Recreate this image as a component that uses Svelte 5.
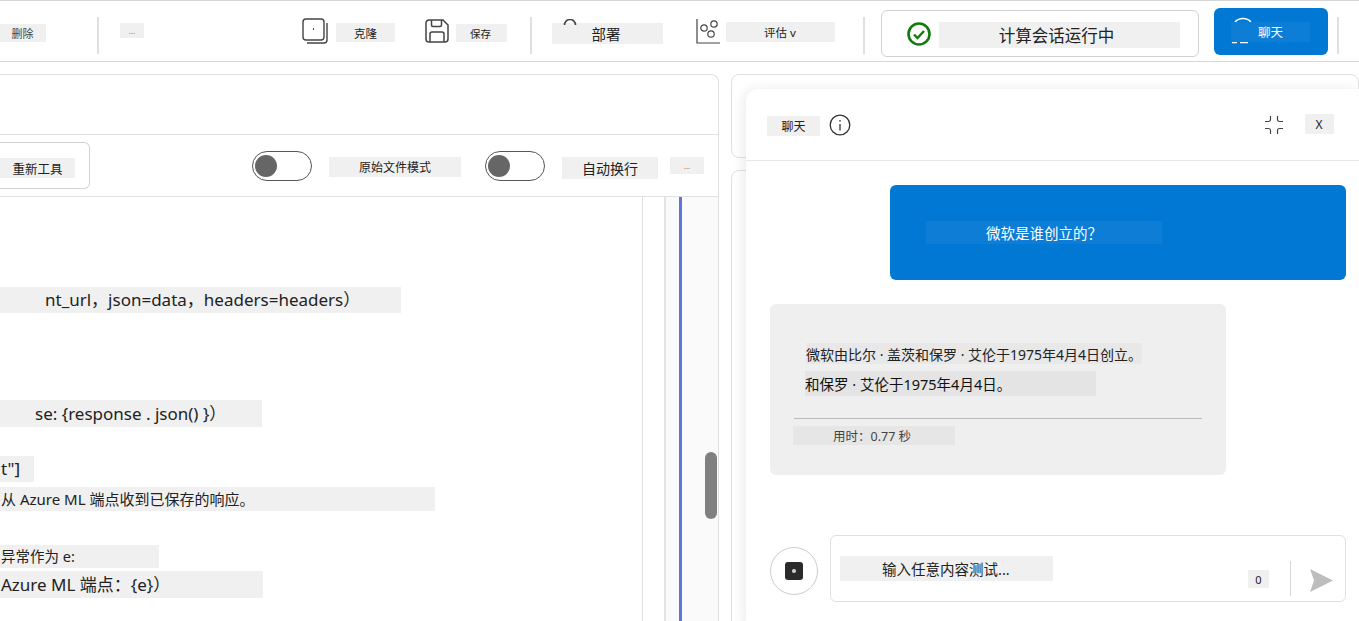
<script>
  const codeLines = [
    { cls: "a", text: "nt_url，json=data，headers=headers）" },
    { cls: "b", text: "se: {response . json() }）" },
    { cls: "c", text: 't"]' },
    { cls: "d", text: "从 Azure ML 端点收到已保存的响应。" },
    { cls: "e", text: "异常作为 e:" },
    { cls: "f", text: "Azure ML 端点：{e}）" },
  ];
</script>

<div class="page">
  <header class="toolbar">
    <span class="tag del">删除</span>
    <i class="divider d1"></i>
    <span class="tag more">...</span>

    <svg class="ico clone" width="26" height="26" viewBox="0 0 26 26" fill="none" stroke="#444" stroke-width="1.4">
      <rect x="1" y="1" width="21" height="21" rx="3" />
      <path d="M25 5v17a3 3 0 0 1-3 3H5" />
      <path d="M11.5 10v2" stroke-width="1" />
    </svg>
    <span class="tag clone-l">克隆</span>

    <svg class="ico save" width="24" height="24" viewBox="0 0 24 24" fill="none" stroke="#444" stroke-width="1.5">
      <path d="M4 1h14l5 5v14a3 3 0 0 1-3 3H4a3 3 0 0 1-3-3V4a3 3 0 0 1 3-3z" />
      <path d="M6.5 1v5a1.5 1.5 0 0 0 1.5 1.5h7A1.5 1.5 0 0 0 16.500 6V1" />
      <path d="M5 23v-8a2 2 0 0 1 2-2h10a2 2 0 0 1 2 2v8" />
    </svg>
    <span class="tag save-l">保存</span>
    <i class="divider d2"></i>

    <span class="tag deploy">
      <svg class="deploy-arc" width="14" height="6" viewBox="0 0 14 6" fill="none" stroke="#444" stroke-width="1.600">
        <path d="M1.500 6a5.500 5.500 0 0 1 11 0" />
      </svg>
      部署
    </span>

    <svg class="ico chart" width="24" height="25" viewBox="0 0 24 25" fill="none" stroke="#444" stroke-width="1.200">
      <path d="M1 0v24h23" />
      <circle cx="8" cy="9" r="3.200" />
      <circle cx="18" cy="5" r="3.200" />
      <circle cx="15" cy="15" r="3.200" />
    </svg>
    <span class="tag eval">评估 v</span>
    <i class="divider d3"></i>

    <div class="status">
      <svg width="24" height="24" viewBox="0 0 24 24" fill="none" stroke="#107c10">
        <circle cx="12" cy="12" r="10.500" stroke-width="2.600" />
        <path d="M7 12.500l3.500 3.500L17 9" stroke-width="2.400" />
      </svg>
      <span class="tag status-l">计算会话运行中</span>
    </div>

    <button class="chat-btn">
      <svg class="spin" width="22" height="27" viewBox="0 0 22 27" fill="none" stroke="#fff" stroke-width="1.600">
        <path d="M3 5a11 11 0 0 1 16 0" />
        <path d="M0 25.500h5M8 25.500h8" />
      </svg>
      <span class="chat-l">聊天</span>
    </button>
    <i class="divider d4"></i>
  </header>

  <main class="main">
    <section class="editor">
      <div class="editor-head"></div>
      <div class="editor-tools">
        <div class="tool-btn"><span class="tag tool-l">重新工具</span></div>
        <span class="toggle t1"><i></i></span>
        <span class="tag raw">原始文件模式</span>
        <span class="toggle t2"><i></i></span>
        <span class="tag wrap">自动换行</span>
        <span class="tag more2">...</span>
      </div>
      <div class="editor-body">
        <div class="code">
          {#each codeLines as line}
            <div class="line {line.cls}">{line.text}</div>
          {/each}
        </div>
        <div class="gutter"></div>
        <div class="minimap">
          <i class="marker"></i>
          <i class="thumb"></i>
        </div>
      </div>
    </section>

    <aside class="side">
      <div class="card top"></div>
      <div class="card rest"></div>
    </aside>
  </main>

  <div class="drawer">
    <div class="drawer-head">
      <span class="tag title">聊天</span>
      <svg class="info" width="22" height="22" viewBox="0 0 22 22" fill="none" stroke="#333" stroke-width="1.300">
        <circle cx="11" cy="11" r="9.800" />
        <path d="M11 10v6.500" />
        <path d="M11 6.200v1.300" stroke-width="1.600" />
      </svg>
      <svg class="collapse" width="20" height="20" viewBox="0 0 20 20" fill="none" stroke="#444" stroke-width="1.200">
        <path d="M6.500 1v3.500a2 2 0 0 1-2 2H1" />
        <path d="M13.500 1v3.500a2 2 0 0 0 2 2H19" />
        <path d="M1 13.500h3.500a2 2 0 0 1 2 2V19" />
        <path d="M19 13.500h-3.500a2 2 0 0 0-2 2V19" />
      </svg>
      <span class="tag close">X</span>
    </div>

    <div class="messages">
      <div class="user-msg"><span class="user-l">微软是谁创立的？</span></div>
      <div class="bot-msg">
        <span class="tag m1">微软由比尔 · 盖茨和保罗 · 艾伦于1975年4月4日创立。</span>
        <span class="tag m2">和保罗 · 艾伦于1975年4月4日。</span>
        <hr />
        <span class="tag m3">用时：0.77 秒</span>
      </div>
    </div>

    <div class="composer">
      <div class="attach"><i></i></div>
      <div class="input">
        <span class="tag hint">输入任意内容测试...</span>
        <span class="tag count">0</span>
        <i class="input-sep"></i>
        <svg width="23" height="23" viewBox="0 0 23 23" fill="#bdbdbd">
          <path d="M0 0l23 11.500L0 23l4-11.500z" />
        </svg>
      </div>
    </div>
  </div>
</div>

<style>
  :global(body) {
    margin: 0;
    background: #fff;
  }

  .page {
    position: relative;
    width: 1359px;
    height: 621px;
    overflow: hidden;
    background: #fff;
    color: #222;
    font-family: "Noto Sans", "Noto Sans CJK SC", sans-serif;
  }

  .tag {
    display: flex;
    flex: none;
    align-items: center;
    justify-content: center;
    box-sizing: border-box;
    background: #f0f0f0;
    white-space: nowrap;
  }

  /* toolbar */
  .toolbar {
    display: flex;
    align-items: flex-start;
    box-sizing: border-box;
    height: 62px;
    border-top: 1px solid #d6d6d6;
    border-bottom: 1px solid #d6d6d6;
  }

  .divider {
    flex: none;
    width: 2px;
    height: 37px;
    margin-top: 16px;
    background: #e0e0e0;
  }

  .ico {
    flex: none;
  }

  .del {
    width: 46px;
    height: 18px;
    margin-top: 23px;
    padding-right: 1px;
    font-size: 11px;
    color: #444;
  }

  .d1 {
    margin-left: 51px;
  }

  .more {
    width: 24px;
    height: 15px;
    margin: 22px 0 0 21px;
    font-size: 8px;
    color: #777;
  }

  .clone {
    margin: 17px 0 0 158px;
  }

  .clone-l {
    width: 59px;
    height: 19px;
    margin: 22px 0 0 8px;
    font-size: 11.500px;
  }

  .save {
    margin: 18px 0 0 30px;
  }

  .save-l {
    width: 51px;
    height: 18px;
    margin: 23px 0 0 7px;
    padding-right: 2px;
    font-size: 10.500px;
  }

  .d2 {
    margin-left: 23px;
  }

  .deploy {
    position: relative;
    width: 111px;
    height: 21px;
    margin: 22px 0 0 20px;
    padding-right: 3px;
    font-size: 14.500px;
  }

  .deploy-arc {
    position: absolute;
    left: 11px;
    top: -4px;
  }

  .chart {
    margin: 18px 0 0 33px;
  }

  .eval {
    width: 109px;
    height: 20px;
    margin: 21px 0 0 6px;
    padding-right: 1px;
    font-size: 11.500px;
  }

  .d3 {
    margin-left: 28px;
  }

  .status {
    display: flex;
    flex: none;
    align-items: center;
    box-sizing: border-box;
    width: 318px;
    height: 47px;
    margin: 9px 0 0 16px;
    padding-left: 25px;
    border: 1px solid #d2d2d2;
    border-radius: 6px;
  }

  .status-l {
    width: 241px;
    height: 26px;
    margin: 2px 0 0 8px;
    padding-right: 6px;
    font-size: 16.500px;
    color: #222;
  }

  .chat-btn {
    position: relative;
    display: flex;
    flex: none;
    align-items: center;
    box-sizing: border-box;
    width: 114px;
    height: 47px;
    margin: 7px 0 0 15px;
    padding: 0 0 0 17px;
    border: 0;
    border-radius: 6px;
    background: #0078d4;
    font: inherit;
  }

  .spin {
    position: absolute;
    left: 18px;
    top: 9px;
  }

  .chat-l {
    position: relative;
    display: flex;
    align-items: center;
    box-sizing: border-box;
    width: 79px;
    height: 20px;
    padding-left: 27px;
    background: #0d7dd6;
    color: #fff;
    font-size: 12.500px;
  }

  .d4 {
    margin-left: 9px;
  }

  /* editor and the cards behind the chat */
  .main {
    display: flex;
    gap: 12px;
    padding-top: 12px;
  }

  .editor {
    flex: none;
    box-sizing: border-box;
    width: 719px;
    height: 580px;
    border: 1px solid #e0e0e0;
    border-left: 0;
    border-radius: 0 8px 0 0;
  }

  .editor-head {
    height: 59px;
    border-bottom: 1px solid #e0e0e0;
  }

  .editor-tools {
    display: flex;
    align-items: flex-start;
    box-sizing: border-box;
    height: 62px;
    border-bottom: 1px solid #e0e0e0;
  }

  .tool-btn {
    flex: none;
    box-sizing: border-box;
    width: 90px;
    height: 47px;
    margin-top: 7px;
    padding-top: 15px;
    border: 1px solid #d2d2d2;
    border-left: 0;
    border-radius: 0 6px 6px 0;
  }

  .tool-l {
    width: 75px;
    height: 20px;
    font-size: 12.500px;
  }

  .toggle {
    display: flex;
    flex: none;
    align-items: center;
    box-sizing: border-box;
    width: 60px;
    height: 30px;
    padding-left: 2px;
    border: 1px solid #555;
    border-radius: 15px;
  }

  .toggle i {
    width: 22px;
    height: 22px;
    border-radius: 50%;
    background: #666;
  }

  .t1 {
    margin: 16px 0 0 162px;
  }

  .raw {
    width: 132px;
    height: 20px;
    margin: 22px 0 0 17px;
    font-size: 12px;
  }

  .t2 {
    margin: 16px 0 0 24px;
  }

  .wrap {
    width: 96px;
    height: 22px;
    margin: 22px 0 0 17px;
    font-size: 14px;
  }

  .more2 {
    width: 34px;
    height: 17px;
    margin: 22px 0 0 12px;
    font-size: 8px;
    color: #777;
  }

  .editor-body {
    display: flex;
    height: 424px;
  }

  .code {
    flex: none;
    box-sizing: border-box;
    width: 643px;
    border-right: 1px solid #e0e0e0;
  }

  .line {
    box-sizing: border-box;
    background: #f0f0f0;
    color: #222;
    white-space: nowrap;
    font-size: 17px;
  }

  .line.a {
    width: 401px;
    height: 26px;
    margin-top: 90px;
    padding-left: 45px;
    line-height: 26px;
  }

  .line.b {
    width: 262px;
    height: 27px;
    margin-top: 87px;
    padding-left: 35px;
    line-height: 27px;
  }

  .line.c {
    width: 34px;
    height: 26px;
    margin-top: 29px;
    padding-left: 1px;
    line-height: 26px;
  }

  .line.d {
    width: 435px;
    height: 24px;
    margin-top: 5px;
    padding-left: 1px;
    font-size: 15px;
    line-height: 24px;
  }

  .line.e {
    width: 159px;
    height: 23px;
    margin-top: 34px;
    padding-left: 1px;
    font-size: 14.500px;
    line-height: 23px;
  }

  .line.f {
    width: 263px;
    height: 27px;
    margin-top: 3px;
    padding-left: 1px;
    line-height: 27px;
  }

  .gutter {
    flex: none;
    width: 21px;
  }

  .minimap {
    display: flex;
    flex: 1;
    align-items: flex-start;
    border-left: 2px solid #e4e4e4;
    background: #fafafa;
    padding-left: 13px;
  }

  .marker {
    flex: none;
    width: 3px;
    height: 100%;
    background: #5f75d8;
  }

  .thumb {
    flex: none;
    width: 12px;
    height: 67px;
    margin: 255px 0 0 23px;
    border-radius: 6px;
    background: #808080;
  }

  .side {
    display: flex;
    flex: 1;
    flex-direction: column;
    gap: 12px;
  }

  .card {
    box-sizing: border-box;
    border: 1px solid #e0e0e0;
    border-radius: 8px;
  }

  .card.top {
    height: 84px;
  }

  .card.rest {
    height: 500px;
  }

  /* chat drawer */
  .drawer {
    position: absolute;
    left: 746px;
    right: 0;
    top: 89px;
    bottom: -10px;
    border-radius: 12px 0 0 12px;
    background: #fff;
    box-shadow: -3px 0 12px rgba(0, 0, 0, 0.08);
  }

  .drawer-head {
    display: flex;
    align-items: flex-start;
    box-sizing: border-box;
    height: 72px;
    border-bottom: 1px solid #e6e6e6;
  }

  .title {
    width: 53px;
    height: 20px;
    margin: 27px 0 0 21px;
    font-size: 12px;
  }

  .info {
    flex: none;
    margin: 25px 0 0 9px;
  }

  .collapse {
    flex: none;
    margin: 26px 0 0 413px;
  }

  .close {
    width: 29px;
    height: 20px;
    margin: 25px 0 0 21px;
    padding-right: 1px;
    font-size: 12px;
  }

  .messages {
    display: flex;
    flex-direction: column;
    height: 350px;
    padding: 24px 13px 0 24px;
  }

  .user-msg {
    display: flex;
    align-items: center;
    align-self: flex-end;
    box-sizing: border-box;
    width: 456px;
    height: 95px;
    padding: 0 0 0 36px;
    border-radius: 6px;
    background: #0078d4;
  }

  .user-l {
    display: flex;
    align-items: center;
    justify-content: center;
    width: 236px;
    height: 23px;
    background: #0d7dd6;
    color: #fff;
    font-size: 14.500px;
  }

  .bot-msg {
    box-sizing: border-box;
    width: 456px;
    height: 171px;
    margin-top: 24px;
    padding: 39px 24px 0;
    border-radius: 6px;
    background: #efefef;
  }

  .m1 {
    justify-content: flex-start;
    width: 336px;
    height: 21px;
    margin-left: 12px;
    background: #e8e8e8;
    font-size: 14px;
  }

  .m2 {
    justify-content: flex-start;
    width: 291px;
    height: 25px;
    margin: 7px 0 0 11px;
    background: #e4e4e4;
    color: #111;
    font-size: 14.500px;
  }

  .bot-msg hr {
    margin: 22px 0 0;
    border: 0;
    border-top: 1px solid #bbb;
  }

  .m3 {
    justify-content: flex-start;
    width: 162px;
    height: 19px;
    margin: 7px 0 0 -1px;
    padding-left: 40px;
    background: #e6e6e6;
    font-size: 12.500px;
    color: #444;
  }

  .composer {
    display: flex;
    align-items: flex-start;
    padding: 0 13px 0 24px;
  }

  .attach {
    display: flex;
    flex: none;
    align-items: center;
    justify-content: center;
    box-sizing: border-box;
    width: 48px;
    height: 48px;
    margin-top: 12px;
    border: 1px solid #ccc;
    border-radius: 50%;
  }

  .attach i {
    width: 18px;
    height: 18px;
    border-radius: 3px;
    background: radial-gradient(circle, #ccc 0 1.5px, #2b2b2b 2.5px);
  }

  .input {
    display: flex;
    flex: 1;
    align-items: flex-start;
    box-sizing: border-box;
    height: 67px;
    margin-left: 12px;
    border: 1px solid #e0e0e0;
    border-radius: 6px;
  }

  .hint {
    justify-content: flex-start;
    width: 213px;
    height: 25px;
    margin: 20px 0 0 9px;
    padding-left: 42px;
    font-size: 14.500px;
  }

  .count {
    width: 21px;
    height: 18px;
    margin: 34px 0 0 195px;
    font-size: 11px;
  }

  .input-sep {
    flex: none;
    width: 1px;
    height: 35px;
    margin: 25px 0 0 21px;
    background: #d6d6d6;
  }

  .input svg {
    flex: none;
    margin: 33px 0 0 19px;
  }
</style>
